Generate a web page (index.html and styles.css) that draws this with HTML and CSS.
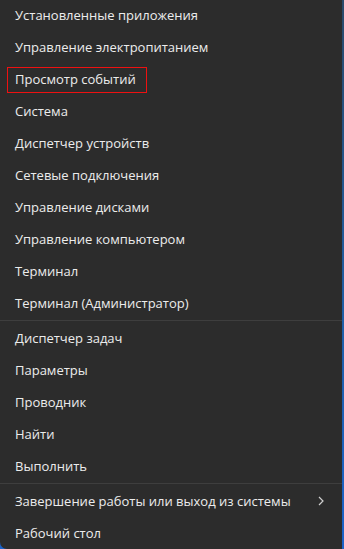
FILE: index.html
```html
<!DOCTYPE html>
<html lang="ru">
<head>
<meta charset="utf-8">
<link rel="stylesheet" href="styles.css">
</head>
<body>
<div class="menu">
  <div class="group">
    <div class="item">Установленные приложения</div>
    <div class="item">Управление электропитанием</div>
    <div class="item marked"><span class="label">Просмотр событий</span><div class="mark"></div></div>
    <div class="item">Система</div>
    <div class="item">Диспетчер устройств</div>
    <div class="item">Сетевые подключения</div>
    <div class="item">Управление дисками</div>
    <div class="item">Управление компьютером</div>
    <div class="item">Терминал</div>
    <div class="item">Терминал (Администратор)</div>
  </div>
  <div class="sep"></div>
  <div class="group">
    <div class="item">Диспетчер задач</div>
    <div class="item">Параметры</div>
    <div class="item">Проводник</div>
    <div class="item">Найти</div>
    <div class="item">Выполнить</div>
  </div>
  <div class="sep"></div>
  <div class="group">
    <div class="item sub"><span class="label">Завершение работы или выход из системы</span>
      <svg class="chev" width="6" height="10" viewBox="0 0 6 10"><path d="M1 1 L5 5 L1 9" fill="none" stroke="#cfcfcf" stroke-width="1.2"/></svg>
    </div>
    <div class="item">Рабочий стол</div>
  </div>
</div>
</body>
</html>
```
FILE: styles.css
```css
html, body {
  margin: 0;
  padding: 0;
}
body {
  width: 344px;
  height: 549px;
  overflow: hidden;
  background: linear-gradient(180deg, #2a4a6a 0%, #1f5fa8 60%, #1b62c8 100%);
  font-family: "Open Sans", "Noto Sans", sans-serif;
}
.menu {
  width: 342px;
  height: 550px;
  margin-top: -1px;
  background: #2c2c2c;
  border-bottom-left-radius: 7px;
  display: flex;
  flex-direction: column;
  color: #ececec;
  font-size: 13px;
}
.group {
  display: flex;
  flex-direction: column;
}
.item {
  height: 32px;
  display: flex;
  align-items: center;
  padding-left: 15px;
  position: relative;
  white-space: nowrap;
}
.sep {
  height: 1px;
  margin: 1px 0 1px;
  background: #3e3e3e;
}
.mark {
  position: absolute;
  left: 7px;
  top: 4px;
  width: 138px;
  height: 24px;
  border: 1.5px solid #ee1111;
  background: transparent;
}
.sub {
  justify-content: space-between;
  padding-right: 18px;
}
.chev {
  display: block;
}
```
